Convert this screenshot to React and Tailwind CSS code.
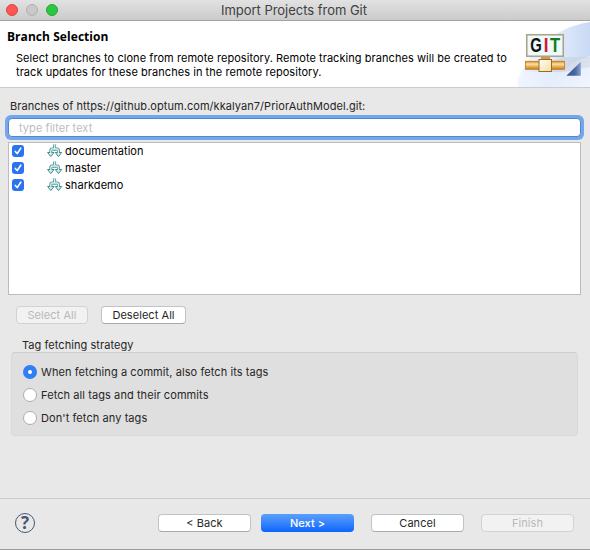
import React from "react";

function BranchIcon() {
  return (
    <svg className="block h-[14px] w-[16px]" viewBox="0 0 16 14" fill="none">
      <path d="M3.8 8.5V6.5Q3.8 5 5.3 5H9.9Q11.4 5 11.4 6.5V8.5" stroke="#5b9297" strokeWidth="3" />
      <path d="M7.6 .5V6.5" stroke="#5b9297" strokeWidth="3" />
      <path d="M.6 8.5H7L3.8 12.6Z M8.3 8.5H14.7L11.5 12.6Z" fill="#c5f1ee" stroke="#4a898f" strokeLinejoin="round" />
      <path d="M3.8 9.5V6.5Q3.8 5 5.3 5H9.9Q11.4 5 11.4 6.5V9.5M7.6 .5V5.5" stroke="#d0f5f1" strokeWidth="1.3" />
    </svg>
  );
}

function GitBanner() {
  return (
    <svg className="block h-[66px] w-[72px] shrink-0" viewBox="518 21 72 66">
      <defs>
        <linearGradient id="sky" x1="0" y1="0" x2="1" y2="0">
          <stop offset="0" stopColor="#f1f6ff" />
          <stop offset=".5" stopColor="#e4edfc" />
          <stop offset="1" stopColor="#c9d9f5" />
        </linearGradient>
        <linearGradient id="lower" x1="0" y1="0" x2="1" y2="1">
          <stop offset="0" stopColor="#dce6f8" />
          <stop offset="1" stopColor="#f1f6ff" />
        </linearGradient>
        <linearGradient id="shadow" x1="0" y1="0" x2="1" y2="0">
          <stop offset="0" stopColor="#c6ccd8" stopOpacity="0" />
          <stop offset=".5" stopColor="#c0c8d6" stopOpacity=".5" />
          <stop offset="1" stopColor="#c6ccd8" stopOpacity=".4" />
        </linearGradient>
        <linearGradient id="gold" x1="0" y1="0" x2="0" y2="1">
          <stop offset="0" stopColor="#d48a1c" />
          <stop offset=".35" stopColor="#ffe09a" />
          <stop offset="1" stopColor="#c87b16" />
        </linearGradient>
        <linearGradient id="node" x1="0" y1="0" x2="1" y2="1">
          <stop offset="0" stopColor="#fff" />
          <stop offset="1" stopColor="#f8dc9a" />
        </linearGradient>
        <linearGradient id="corner" x1="0" y1="0" x2="1" y2="0">
          <stop offset="0" stopColor="#31578f" />
          <stop offset=".6" stopColor="#46699f" />
          <stop offset="1" stopColor="#86a2cf" />
        </linearGradient>
      </defs>
      <path d="M516 87C522 58 550 28 590 22V87Z" fill="url(#sky)" />
      <path d="M548 87C556 74 570 62 590 56V87Z" fill="url(#lower)" />
      <path d="M520 72L532 66L564 57L590 57V67L564 72Z" fill="url(#shadow)" />
      <rect x="526.75" y="34.75" width="36.5" height="21.5" fill="#eefafa" stroke="#aaa58a" strokeWidth="1.6" />
      <g fontFamily="Liberation Sans, sans-serif" fontWeight="700" fontSize="19.5">
        <text x="530.2" y="52.3" textLength="11.6" lengthAdjust="spacingAndGlyphs" fill="#111">G</text>
        <text x="543.8" y="52.3" textLength="4.8" lengthAdjust="spacingAndGlyphs" fill="#d3192b">I</text>
        <text x="549.9" y="52.3" textLength="10.2" lengthAdjust="spacingAndGlyphs" fill="#147a22">T</text>
      </g>
      <rect x="541" y="57" width="9" height="4" fill="#d69a45" />
      <rect x="525.5" y="61.3" width="39" height="8" fill="url(#gold)" stroke="#c17b20" strokeWidth=".8" />
      <rect x="539" y="59.5" width="12.5" height="12" fill="url(#node)" stroke="#9c6a28" />
      <path d="M566.3 75.8L580.8 61.7V75.8Z" fill="url(#corner)" />
    </svg>
  );
}

const base = "flex h-[18px] items-center justify-center rounded-[4px] whitespace-nowrap ";
const normal = "border border-[#c3c3c3] border-b-[#aaaaaa] bg-white text-[#262626]";
const disabled = "border border-[#d2d2d2] bg-[#f2f2f2] text-[#b9b9b9]";

function Radio({ on, children }) {
  return (
    <label className="flex h-[14px] items-center gap-1">
      {on ? (
        <span className="flex size-[14px] items-center justify-center rounded-full bg-[#2f7ff5]">
          <span className="size-[4px] rounded-full bg-white" />
        </span>
      ) : (
        <span className="size-[14px] rounded-full border border-[#adadad] bg-white" />
      )}
      <span className="whitespace-nowrap tracking-[0.08px]">{children}</span>
    </label>
  );
}

export default function App() {
  return (
    <div className="flex h-[550px] w-[590px] flex-col overflow-hidden border-b border-[#9b9b9b] bg-[#e8e8e8] font-['Inter','Liberation_Sans',sans-serif] text-[11px] leading-[14px] tracking-[0.055px] text-[#262626]">
      <header className="flex h-[21px] shrink-0 items-center gap-2 border-b border-[#a2a2a2] bg-linear-to-b from-[#e2e2e2] to-[#cbcbcb] pl-[6px]">
        <span className="size-3 rounded-full border border-[#e0443f] bg-[#fc5753]" />
        <span className="size-3 rounded-full border border-[#b0b0b0] bg-[#c9c9c9]" />
        <span className="size-3 rounded-full border border-[#24a836] bg-[#2cc640]" />
        <h1 className="ml-[155px] whitespace-nowrap text-[13px] tracking-[-0.03px] text-[#404040]">Import Projects from Git</h1>
      </header>
      <section className="flex h-[67px] shrink-0 border-b border-[#cccccc] bg-white text-black">
        <div className="w-[518px] pt-2">
          <h2 className="pl-[7px] font-['Open_Sans',sans-serif] text-[12px] leading-[15px] font-bold">Branch Selection</h2>
          <p className="pt-[7px] pl-4 whitespace-nowrap">
            Select branches to clone from remote repository. Remote tracking branches will be created to
            <br />
            track updates for these branches in the remote repository.
          </p>
        </div>
        <GitBanner />
      </section>
      <main className="h-[410px] shrink-0">
        <div className="pt-[11px] pl-[10px] whitespace-nowrap">Branches of https://github.optum.com/kkalyan7/PriorAuthModel.git:</div>
        <div className="mt-[2px] ml-[5px] h-[25px] w-[579px] rounded-[6px] bg-[#75a6ea] p-[3px]">
          <div className="flex h-[19px] items-center rounded-[4px] border border-[#4d87da] bg-white pl-[10px] text-[#bdbdbd]">type filter text</div>
        </div>
        <div className="mt-[2px] ml-2 h-[153px] w-[573px] border border-[#bcbcbc] bg-white text-black">
          {["documentation", "master", "sharkdemo"].map((name) => (
            <div key={name} className="flex h-[17px] items-center pb-[2px] pl-[3px]">
              <span className="flex size-3 items-center justify-center rounded-[3px] bg-[#2c74ef]">
                <svg className="size-3" viewBox="0 0 12 12" fill="none" stroke="white" strokeWidth="1.6" strokeLinecap="round" strokeLinejoin="round">
                  <path d="M3.3 6.4L5.2 8.6L8.8 3.2" />
                </svg>
              </span>
              <span className="ml-[23px]"><BranchIcon /></span>
              <span className="ml-[2px]">{name}</span>
            </div>
          ))}
        </div>
        <div className="mt-[11px] ml-4 flex gap-[13px]">
          <button className={base + disabled + " w-[72px]"}>Select All</button>
          <button className={base + normal + " w-[85px]"}>Deselect All</button>
        </div>
        <div className="mt-[14px] ml-[22px]">Tag fetching strategy</div>
        <div className="ml-[11px] flex h-[84px] w-[567px] flex-col gap-[9px] rounded-[4px] border border-[#d9d9d9] border-t-[#cecece] bg-[#dfdfdf] pt-3 pl-[11px]">
          <Radio on>When fetching a commit, also fetch its tags</Radio>
          <Radio>Fetch all tags and their commits</Radio>
          <Radio>Don't fetch any tags</Radio>
        </div>
      </main>
      <footer className="flex min-h-0 flex-1 items-start border-t border-[#cccccc] pt-[15px] pl-[15px]">
        <span className="-mt-[1px] flex size-5 items-center justify-center rounded-full border border-[#465775] font-['Open_Sans'] text-[17px] font-bold text-[#465775]">?</span>
        <button className={base + normal + " ml-[123px] w-[93px]"}>&lt; Back</button>
        <button className={base + "ml-[10px] w-[93px] bg-linear-to-b from-[#5a9ffb] to-[#0864fb] font-medium text-white"}>Next &gt;</button>
        <button className={base + normal + " ml-[17px] w-[93px]"}>Cancel</button>
        <button className={base + disabled + " ml-[17px] w-[93px]"}>Finish</button>
      </footer>
    </div>
  );
}
